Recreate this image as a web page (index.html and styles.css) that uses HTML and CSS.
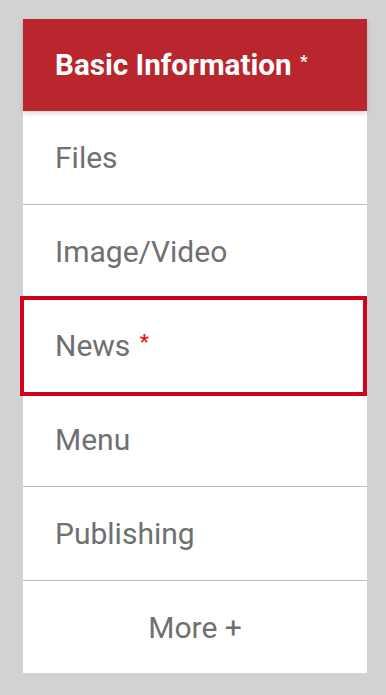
FILE: index.html
```html
<!DOCTYPE html>
<html lang="en">
<head>
<meta charset="utf-8">
<title>Sections</title>
<link rel="stylesheet" href="styles.css">
</head>
<body>
<nav class="card">
  <div class="header">Basic Information <span class="req req-light">*</span></div>
  <ul class="list">
    <li class="item">Files</li>
    <li class="item">Image/Video</li>
    <li class="item item-focus">News <span class="req req-red">*</span></li>
    <li class="item">Menu</li>
    <li class="item">Publishing</li>
    <li class="item item-more">More +</li>
  </ul>
</nav>
</body>
</html>
```

FILE: styles.css
```css
html, body {
  margin: 0;
  padding: 0;
  background: #d1d2d4;
}
body {
  padding: 19px 19px 22px 23px;
  font-family: Roboto, "Liberation Sans", Arial, sans-serif;
}
.card {
  width: 344px;
  background: #ffffff;
}
.header {
  position: relative;
  z-index: 2;
  height: 92px;
  display: flex;
  align-items: center;
  padding-left: 32px;
  padding-bottom: 1px;
  box-sizing: border-box;
  background: #b9262d;
  color: #ffffff;
  font-weight: 700;
  font-size: 29.6px;
  white-space: pre;
  box-shadow: 0 2px 5px rgba(0, 0, 0, 0.18);
}
.list {
  list-style: none;
  margin: 0;
  padding: 0;
}
.item {
  position: relative;
  height: 93px;
  display: flex;
  align-items: center;
  padding-left: 32px;
  border-bottom: 1px solid #bdbcb8;
  color: #6f7072;
  font-size: 30px;
  white-space: pre;
}
.item:last-child {
  border-bottom: none;
  height: 92px;
}
.item-more {
  justify-content: center;
  padding-left: 0;
}
.item-focus::after {
  content: "";
  position: absolute;
  left: -3px;
  right: 0;
  top: -3px;
  bottom: -4px;
  border: 4px solid #d0021b;
}
.req {
  position: relative;
}
.req-light {
  font-size: 17px;
  top: -4px;
  margin-left: 1px;
}
.req-red {
  color: #e8121c;
  font-size: 20px;
  font-weight: 700;
  top: -4px;
  margin-left: 2px;
}
```
